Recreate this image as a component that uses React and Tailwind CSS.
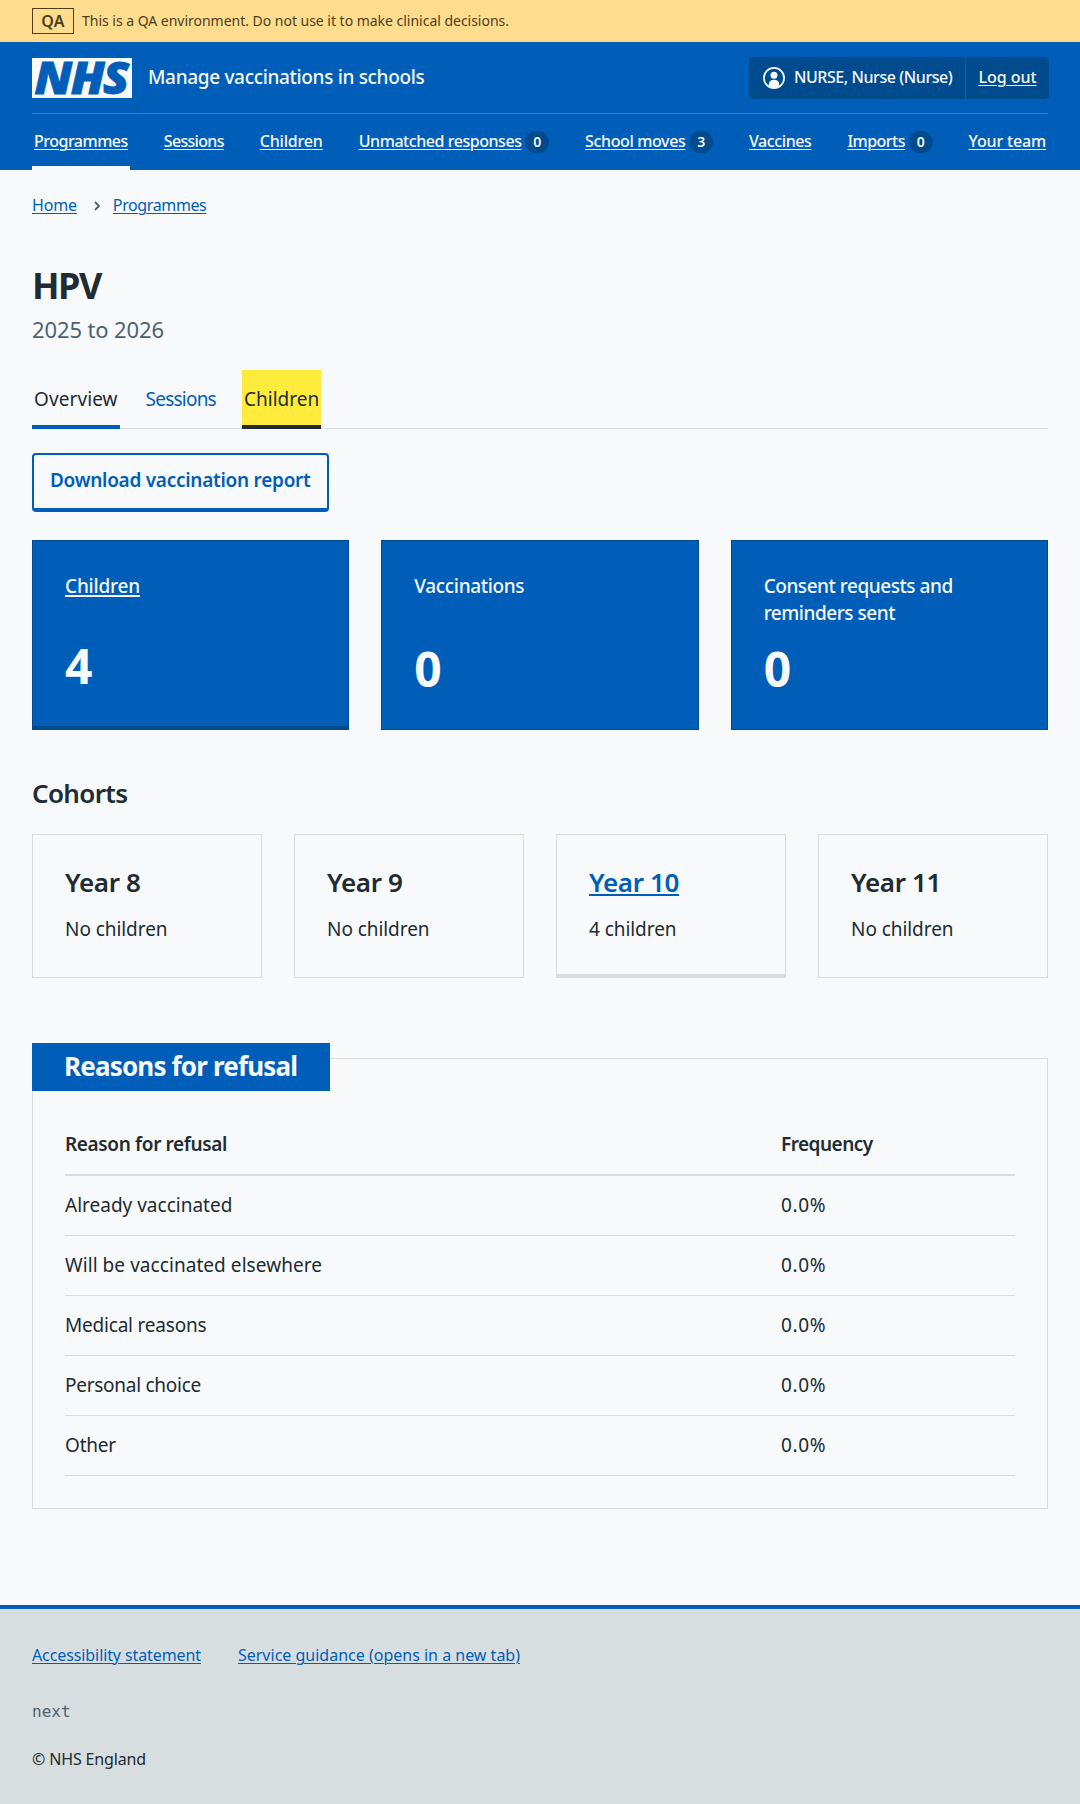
const navItems = [
  { label: "Programmes", tracking: "tracking-[-0.5px]", active: true },
  { label: "Sessions", tracking: "tracking-[-0.69px]" },
  { label: "Children", tracking: "tracking-[-0.18px]" },
  { label: "Unmatched responses", tracking: "tracking-[-0.45px]", count: 0 },
  { label: "School moves", tracking: "tracking-[-0.37px]", count: 3 },
  { label: "Vaccines", tracking: "tracking-[-0.41px]" },
  { label: "Imports", tracking: "tracking-[-0.53px]", count: 0 },
  { label: "Your team", tracking: "tracking-[-0.16px]" },
];

const cohorts = [
  { label: "Year 8", text: "No children" },
  { label: "Year 9", text: "No children" },
  { label: "Year 10", text: "4 children", link: true },
  { label: "Year 11", text: "No children" },
];

const reasons = [
  { label: "Already vaccinated", tracking: "tracking-normal" },
  { label: "Will be vaccinated elsewhere", tracking: "tracking-[0.06px]" },
  { label: "Medical reasons", tracking: "tracking-[-0.2px]" },
  { label: "Personal choice", tracking: "tracking-[-0.27px]" },
  { label: "Other", tracking: "tracking-[-0.2px]" },
];

function NhsLogo() {
  return (
    <svg
      width="100"
      height="40"
      viewBox="0 0 100 40"
      role="img"
      aria-label="NHS"
      className="shrink-0 overflow-visible"
    >
      <rect width="100" height="40" fill="#f7f9fb" />
      <text
        x="2.6"
        y="36"
        fontSize="45"
        textLength="93"
        lengthAdjust="spacingAndGlyphs"
        strokeWidth="0.9"
        className="fill-[#005eb8] stroke-[#005eb8] font-black tracking-[-1.5px] italic"
      >
        NHS
      </text>
    </svg>
  );
}

function UserIcon() {
  return (
    <svg width="22" height="22" viewBox="0 0 22 22" fill="none" className="shrink-0">
      <circle cx="11" cy="11" r="10.1" stroke="#f7f9fb" strokeWidth="1.7" />
      <circle cx="11" cy="8.3" r="3.5" fill="#f7f9fb" />
      <path d="M5.8 19.6v-2.4c0-2.6 2-4.4 5.2-4.4s5.2 1.8 5.2 4.4v2.4a10 10 0 0 1-10.4 0Z" fill="#f7f9fb" />
    </svg>
  );
}

function Header() {
  return (
    <header className="h-32 bg-[#005eb8] px-8 text-[#f7f9fb]">
      <div className="flex h-[72px] items-center border-b border-[#337ec6]">
        <NhsLogo />
        <span className="ml-4 pb-px text-[19px] leading-7 font-medium tracking-[-0.33px]">
          Manage vaccinations in schools
        </span>
        <div className="-mr-[0.5px] ml-auto flex h-[42px] rounded bg-[#004b8d] text-base font-medium">
          <div className="flex items-center border-r border-[#005eb8] pr-[13px] pl-[14px]">
            <UserIcon />
            <span className="ml-[9px] pb-px tracking-[-0.43px]">NURSE, Nurse (Nurse)</span>
          </div>
          <a className="flex items-center px-3 pb-px tracking-[-0.04px] underline decoration-1 underline-offset-[2px]">
            Log out
          </a>
        </div>
      </div>
      <nav className="flex h-14 justify-between">
        {navItems.map((item) => (
          <div
            key={item.label}
            className={
              item.active
                ? "flex items-start border-b-4 border-[#f7f9fb] px-[2px] pt-[15px]"
                : "flex items-start px-[2px] pt-[15px]"
            }
          >
            <a
              className={`${item.tracking} text-base leading-6 font-medium underline decoration-1 underline-offset-[2px]`}
            >
              {item.label}
            </a>
            {item.count !== undefined && (
              <span className="mt-[2px] ml-1 flex h-[22px] w-[23.6px] items-center justify-center rounded-full bg-[#004b8d] text-sm font-semibold">
                {item.count}
              </span>
            )}
          </div>
        ))}
      </nav>
    </header>
  );
}

function Tabs() {
  return (
    <div className="mt-[25px] flex h-[59px] gap-6 border-b border-[#d8dde0] text-[19px] leading-7">
      <div className="h-[59px] w-[87.6px] border-b-4 border-[#005eb8] px-[2px] pt-[15px] tracking-[0.09px]">
        Overview
      </div>
      <div className="h-[59px] w-[74.4px] px-[2px] pt-[15px] tracking-[-0.78px] text-[#005eb8]">
        Sessions
      </div>
      <div className="h-[59px] w-[79px] border-b-4 border-[#212b32] bg-[#ffeb3b] px-[2px] pt-[15px]">
        Children
      </div>
    </div>
  );
}

function StatCards() {
  return (
    <div className="mt-[28px] grid h-[190px] grid-cols-3 gap-8 text-[19px] leading-[27px] font-medium text-[#f7f9fb]">
      <div className="flex flex-col justify-between border border-b-4 border-[#004b8d] bg-[#005eb8] px-8 pt-8 pb-8">
        <a className="tracking-[-0.19px] underline decoration-[1.5px] underline-offset-[2px]">
          Children
        </a>
        <p className="text-5xl leading-[56px] font-bold tracking-[-0.8px]">4</p>
      </div>
      <div className="flex flex-col justify-between border border-[#004b8d] bg-[#005eb8] px-8 pt-8 pb-8">
        <h3 className="tracking-[-0.33px]">Vaccinations</h3>
        <p className="text-5xl leading-[56px] font-bold tracking-[-0.8px]">0</p>
      </div>
      <div className="flex flex-col justify-between border border-[#004b8d] bg-[#005eb8] px-8 pt-8 pb-8">
        <h3 className="tracking-[-0.46px]">
          Consent requests and
          <br />
          reminders sent
        </h3>
        <p className="text-5xl leading-[56px] font-bold tracking-[-0.8px]">0</p>
      </div>
    </div>
  );
}

function Cohorts() {
  return (
    <section>
      <h2 className="mt-[45px] text-[26px] leading-9 font-semibold tracking-[-0.65px]">Cohorts</h2>
      <div className="mt-[23px] grid h-36 grid-cols-4 gap-8">
        {cohorts.map((c) => (
          <div
            key={c.label}
            className={
              c.link
                ? "border border-b-4 border-[#d8dde0] px-8 pt-[29px]"
                : "border border-[#d8dde0] px-8 pt-[29px]"
            }
          >
            <h3 className="text-[26px] leading-9 font-semibold tracking-[-0.36px]">
              {c.link ? (
                <a className="text-[#005eb8] underline decoration-2 underline-offset-[2px]">{c.label}</a>
              ) : (
                c.label
              )}
            </h3>
            <p className="mt-[15px] text-[19px] leading-7 tracking-[-0.06px]">{c.text}</p>
          </div>
        ))}
      </div>
    </section>
  );
}

function Refusals() {
  return (
    <section className="mt-20 border border-[#d8dde0] px-8 pb-8 text-[19px] leading-7">
      <h2 className="-mt-4 -ml-[33px] h-12 w-[297.6px] bg-[#005eb8] pl-8 text-[26px] leading-[46px] font-bold tracking-[-0.82px] text-[#f7f9fb]">
        Reasons for refusal
      </h2>
      <div className="mt-[39px] flex h-[46px] border-b-2 border-[#d8dde0] font-semibold">
        <span className="w-[716px] tracking-[-0.36px]">Reason for refusal</span>
        <span className="tracking-[-0.53px]">Frequency</span>
      </div>
      {reasons.map((r) => (
        <div key={r.label} className="flex h-[60px] border-b border-[#d8dde0] pt-[15px]">
          <span className={`${r.tracking} w-[716px]`}>{r.label}</span>
          <span className="tracking-[0.6px]">0.0%</span>
        </div>
      ))}
    </section>
  );
}

export default function App() {
  return (
    <div className="min-h-[1804px] w-[1080px] bg-[#f7f9fb] font-['Noto_Sans',sans-serif] text-[#212b32]">
      <div className="flex h-[42px] items-center bg-[#ffdc8e] px-8 text-[#4d3f1b]">
        <strong className="h-[26px] w-[42px] border border-[#4d3f1b] text-center text-base leading-6 font-semibold tracking-[0.3px]">
          QA
        </strong>
        <span className="ml-2 text-sm tracking-[-0.02px]">
          This is a QA environment. Do not use it to make clinical decisions.
        </span>
      </div>
      <Header />
      <main className="h-[1435px] px-8 pt-[23px]">
        <div className="flex items-center text-base leading-6 text-[#005eb8]">
          <a className="tracking-[-0.17px] underline decoration-1 underline-offset-[2px]">Home</a>
          <svg width="6" height="10" viewBox="0 0 6 10" fill="none" className="mt-[2px] mr-[13px] ml-[17px]">
            <path d="m1 1 4 4-4 4" stroke="#4c6272" strokeWidth="1.8" />
          </svg>
          <a className="tracking-[-0.38px] underline decoration-1 underline-offset-[2px]">Programmes</a>
        </div>
        <h1 className="mt-[47px] text-4xl leading-[44px] font-bold tracking-[-1.5px]">HPV</h1>
        <p className="mt-[5px] text-[22px] leading-8 tracking-[-0.12px] text-[#4c6272]">2025 to 2026</p>
        <Tabs />
        <a className="mt-6 flex h-[59px] w-[296.5px] justify-center rounded border-2 border-b-4 border-[#005eb8] pt-[11px] text-[19px] leading-7 font-semibold tracking-[-0.27px] text-[#005eb8]">
          Download vaccination report
        </a>
        <StatCards />
        <Cohorts />
        <Refusals />
      </main>
      <footer className="h-[199px] border-t-4 border-[#005eb8] bg-[#d8dde0] px-8 pt-[34px] text-base leading-6">
        <div className="flex gap-[37px] text-[#005eb8]">
          <a className="tracking-[-0.1px] underline decoration-1 underline-offset-[2px]">
            Accessibility statement
          </a>
          <a className="underline decoration-1 underline-offset-[2px]">
            Service guidance (opens in a new tab)
          </a>
        </div>
        <p className="mt-[33px] font-['DejaVu_Sans_Mono',monospace] text-[#4c6272]">next</p>
        <p className="mt-[23px] tracking-[-0.15px]">© NHS England</p>
      </footer>
    </div>
  );
}
